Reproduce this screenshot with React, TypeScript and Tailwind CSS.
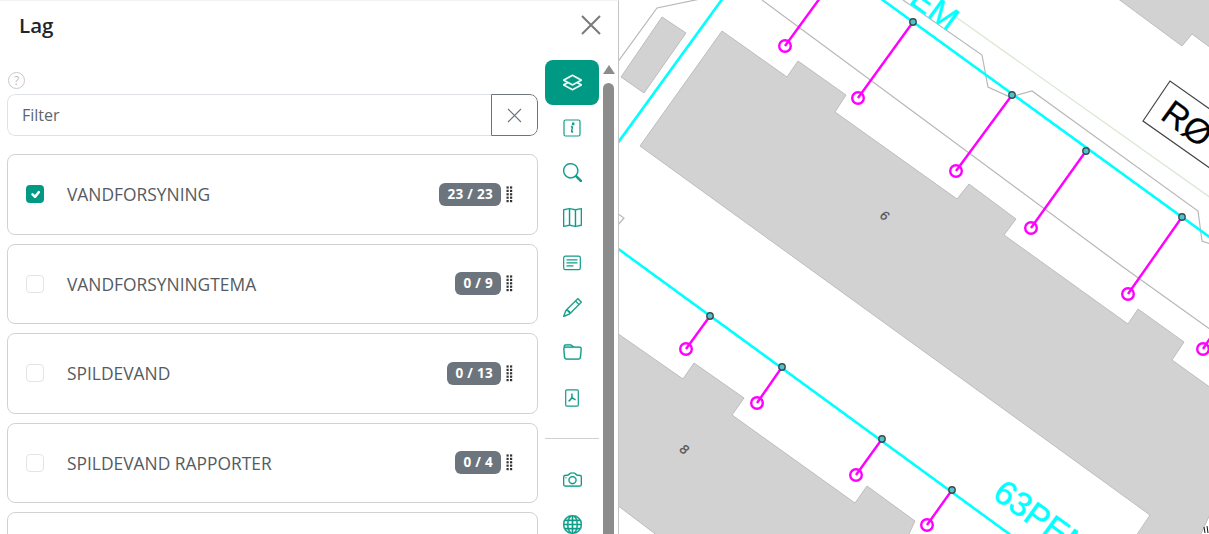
import { BsLayers, BsSearch, BsMap, BsPencil, BsFolder, BsCamera, BsGlobe, BsCheck } from "react-icons/bs";

const layers = [
  { name: "VANDFORSYNING", count: "23 / 23", checked: true },
  { name: "VANDFORSYNINGTEMA", count: "0 / 9", checked: false },
  { name: "SPILDEVAND", count: "0 / 13", checked: false },
  { name: "SPILDEVAND RAPPORTER", count: "0 / 4", checked: false },
];

function InfoIcon() {
  return (
    <svg width="18" height="18" viewBox="0 0 18 18" fill="none" stroke="currentColor">
      <rect x="1" y="1" width="16" height="16" rx="1.5" strokeWidth="1.2" />
      <path d="M9.8 4.2h.9v1.4h-1.1zM9.5 7.4l-1.6.3M9.6 7.4l-1 5.2c0 .5.5.6 1.5 0" strokeWidth="1.4" />
    </svg>
  );
}

function NotesIcon() {
  return (
    <svg width="18" height="18" viewBox="0 0 18 18" fill="none" stroke="currentColor">
      <rect x="0.7" y="2.2" width="16.6" height="13.4" rx="1.6" strokeWidth="1.2" />
      <path d="M3.5 5.8h11M3.5 8.8h11M3.5 11.8h7" strokeWidth="1.3" />
    </svg>
  );
}

function PdfIcon() {
  return (
    <svg width="18" height="18" viewBox="0 0 18 18" fill="none" stroke="currentColor">
      <rect x="2.7" y="0.8" width="12.6" height="16.4" rx="1.2" strokeWidth="1.2" />
      <path d="M9 4.5c-.2 2.5 0 3.5 0 4.2M9 8.5c-1 1.6-2 2.8-3.4 3.8M9 8.5c1.3 1.2 2.4 1.9 3.6 2.3" strokeWidth="1.5" />
    </svg>
  );
}

function DragHandle() {
  const dots = [0, 1, 2, 3, 4];
  return (
    <svg width="7" height="17" viewBox="0 0 7 17" className="ml-[5px]" fill="#333">
      {dots.map((i) => (
        <g key={i}>
          <rect x="0.5" y={i * 3.4 + 0.4} width="2.2" height="2.2" />
          <rect x="4" y={i * 3.4 + 0.4} width="2.2" height="2.2" />
        </g>
      ))}
    </svg>
  );
}

function NavButton({ children, active }: { children: React.ReactNode; active?: boolean }) {
  return (
    <div
      className={
        active
          ? "flex h-[45px] w-[54px] shrink-0 items-center justify-center rounded-lg bg-[#009983] text-white"
          : "flex h-[45px] w-[54px] shrink-0 items-center justify-center text-[#0f9c88]"
      }
    >
      {children}
    </div>
  );
}

function MapView() {
  const nodes = [
    [913, 22],
    [1012, 95],
    [1086, 151],
    [1182, 217],
    [710, 316],
    [782, 367],
    [882, 439],
    [952, 490],
  ];
  const services = [
    [820, -2, 785, 46],
    [913, 22, 858, 98],
    [1012, 95, 956, 171],
    [1086, 151, 1031, 228],
    [1182, 217, 1128, 294],
    [1222, 320, 1203, 349],
    [710, 316, 686, 349],
    [782, 367, 757, 403],
    [882, 439, 856, 475],
    [952, 490, 927, 525],
  ];
  return (
    <svg className="block h-full w-full" viewBox="619 0 590 534">
      <rect x="619" y="0" width="590" height="534" fill="#fff" />
      {/* bygninger */}
      <g fill="#d2d2d2" stroke="#bdbdbd" strokeWidth="1">
        <polygon points="722,31 787,77 798,61 846,95 835,112 957,199 969,184 1016,219 1004,235 1128,324 1138,309 1184,342 1172,360 1211,388 1211,512 1200,536 1136,536 1150,515 640,146" />
        <polygon points="1117,-2 1182,46 1192,34 1211,48 1211,-2" />
        <polygon points="662,17 686,33 644,93 621,77" />
        <polygon points="617,333 683,379 694,363 744,398 732,415 855,503 867,486 915,521 908,536 658,536 617,505" />
      </g>
      {/* skel */}
      <g fill="none" stroke="#b8b8b8" strokeWidth="1.2">
        <polyline points="762,0 915,113 1123,267 1211,330" />
        <polyline points="617,63 657,8 705,-2" />
        <polyline points="903,0 982,55 988,87 1010,97 1032,91 1198,211 1202,241 1211,244" />
        <polyline points="617,213 624,218 617,226" />
      </g>
      <line x1="953" y1="15" x2="1211" y2="198" stroke="#dbe9d4" strokeWidth="1.3" />
      {/* hovedledninger */}
      <g stroke="#00ffff" strokeWidth="2.6" fill="none">
        <line x1="617" y1="144" x2="723" y2="-2" />
        <line x1="880" y1="-2" x2="1211" y2="238" />
        <line x1="617" y1="248" x2="1012" y2="536" />
      </g>
      {/* stikledninger */}
      <g stroke="#ff00ff" strokeWidth="2.4" fill="none">
        {services.map(([x1, y1, x2, y2]) => (
          <g key={`${x1}-${y1}`}>
            <line x1={x1} y1={y1} x2={x2} y2={y2} />
            <circle cx={x2} cy={y2} r="5.8" />
          </g>
        ))}
      </g>
      {nodes.map(([x, y]) => (
        <circle key={x} cx={x} cy={y} r="3.2" fill="#4fc3c9" stroke="#3d4a4d" strokeWidth="1.4" />
      ))}
      <g fontFamily="Liberation Sans, sans-serif">
        <text x="893" y="-8" fontSize="33" fill="#00ffff" stroke="#00ffff" strokeWidth="0.5" transform="rotate(36 893 -8)">
          6EM
        </text>
        <text x="991" y="497" fontSize="34" fill="#00ffff" stroke="#00ffff" strokeWidth="0.5" transform="rotate(36 991 497)">
          63PEM
        </text>
        <text x="881" y="221" fontSize="13" fontStyle="italic" fill="#555" stroke="#555" strokeWidth="0.3" transform="rotate(36 886 216)">
          6
        </text>
        <text x="681" y="454" fontSize="13" fontStyle="italic" fill="#555" stroke="#555" strokeWidth="0.3" transform="rotate(36 685 449)">
          8
        </text>
        <polygon points="1170,81 1143,121 1211,169 1211,110" fill="#fff" stroke="#444" strokeWidth="1.2" />
        <text x="1159" y="118" fontSize="35" fill="#000" stroke="#000" strokeWidth="0.2" transform="rotate(36 1159 118)">
          RØ
        </text>
        <path d="M1204 527l1 6M1207 526l1 7" stroke="#111" strokeWidth="1" fill="none" />
      </g>
    </svg>
  );
}

export default function App() {
  return (
    <div className="flex h-[534px] w-full overflow-hidden bg-white font-['Open_Sans',sans-serif]">
      <aside className="flex w-[619px] shrink-0 flex-col border-r border-t border-r-[#c4c4c4] border-t-[#f2f2f2]">
        <header className="flex h-[59px] shrink-0 items-start justify-between pl-[19px] pr-[17px] pt-[10px]">
          <h1 className="text-[20.5px] font-semibold leading-[28px] text-[#212529]">Lag</h1>
          <svg width="20" height="20" viewBox="0 0 20 20" className="mt-1" stroke="#7a7a7a" strokeWidth="2" fill="none">
            <path d="M1 1l18 18M19 1L1 19" />
          </svg>
        </header>

        <div className="flex min-h-0 flex-1">
          <div className="w-[545px] shrink-0 pl-[7px] pr-[7px] pt-3">
            <div className="mb-[5px] ml-[1px] flex h-[17px] w-[17px] items-center justify-center rounded-full border border-[#c8c8c8] text-[12px] leading-none text-[#bdbdbd]">
              ?
            </div>
            <div className="flex h-[42px] overflow-hidden rounded-lg">
              <div className="flex flex-1 items-center rounded-l-lg border border-r-0 border-[#dee2e6] pl-[14px] text-[16px] text-[#5c6670]">
                Filter
              </div>
              <div className="flex w-[47px] items-center justify-center rounded-r-lg border border-[#6c757d]">
                <svg width="15" height="15" viewBox="0 0 15 15" stroke="#6c757d" strokeWidth="1.1" fill="none">
                  <path d="M1 1l13 13M14 1L1 14" />
                </svg>
              </div>
            </div>

            <div className="mt-[18px] flex flex-col gap-[9px]">
              {layers.map((layer) => (
                <div
                  key={layer.name}
                  className="flex h-[80.5px] shrink-0 items-center rounded-lg border border-[#d2d2d2] pl-[18px] pr-[24px]"
                >
                  {layer.checked ? (
                    <span className="flex h-[18px] w-[18px] items-center justify-center rounded-[4px] bg-[#009983] text-[15px] text-white">
                      <BsCheck strokeWidth={1.2} />
                    </span>
                  ) : (
                    <span className="h-[18px] w-[18px] rounded-[4px] border border-[#e4e4e4]" />
                  )}
                  <span className="ml-[23px] flex-1 text-[17.4px] text-[#555b61]">{layer.name}</span>
                  <span className="rounded-md bg-[#6c757d] px-2 py-[3px] text-[13.5px] font-bold leading-[17px] tracking-[0.3px] text-white">
                    {layer.count}
                  </span>
                  <DragHandle />
                </div>
              ))}
              <div className="h-[80.5px] shrink-0 rounded-lg border border-[#d2d2d2]" />
            </div>
          </div>

          <nav className="flex w-[54px] shrink-0 flex-col">
            <NavButton active>
              <BsLayers size={19} strokeWidth={0.4} />
            </NavButton>
            <NavButton>
              <InfoIcon />
            </NavButton>
            <NavButton>
              <BsSearch size={19} strokeWidth={0.2} />
            </NavButton>
            <NavButton>
              <BsMap size={19} strokeWidth={0.2} />
            </NavButton>
            <NavButton>
              <NotesIcon />
            </NavButton>
            <NavButton>
              <BsPencil size={19} strokeWidth={0.2} />
            </NavButton>
            <NavButton>
              <BsFolder size={19} strokeWidth={0.2} />
            </NavButton>
            <NavButton>
              <PdfIcon />
            </NavButton>
            <div className="my-[18px] h-px shrink-0 bg-[#d0d0d0]" />
            <NavButton>
              <BsCamera size={19} strokeWidth={0.2} />
            </NavButton>
            <NavButton>
              <BsGlobe size={19} strokeWidth={0.4} />
            </NavButton>
          </nav>

          <div className="ml-1 flex w-[11px] shrink-0 flex-col items-center pt-[5px]">
            <div className="h-0 w-0 border-x-[6px] border-b-[9px] border-x-transparent border-b-[#8c8c8c]" />
            <div className="mt-[9px] w-[11px] flex-1 rounded-t-full bg-[#8c8c8c]" />
          </div>
        </div>
      </aside>

      <main className="min-w-0 flex-1">
        <MapView />
      </main>
    </div>
  );
}
